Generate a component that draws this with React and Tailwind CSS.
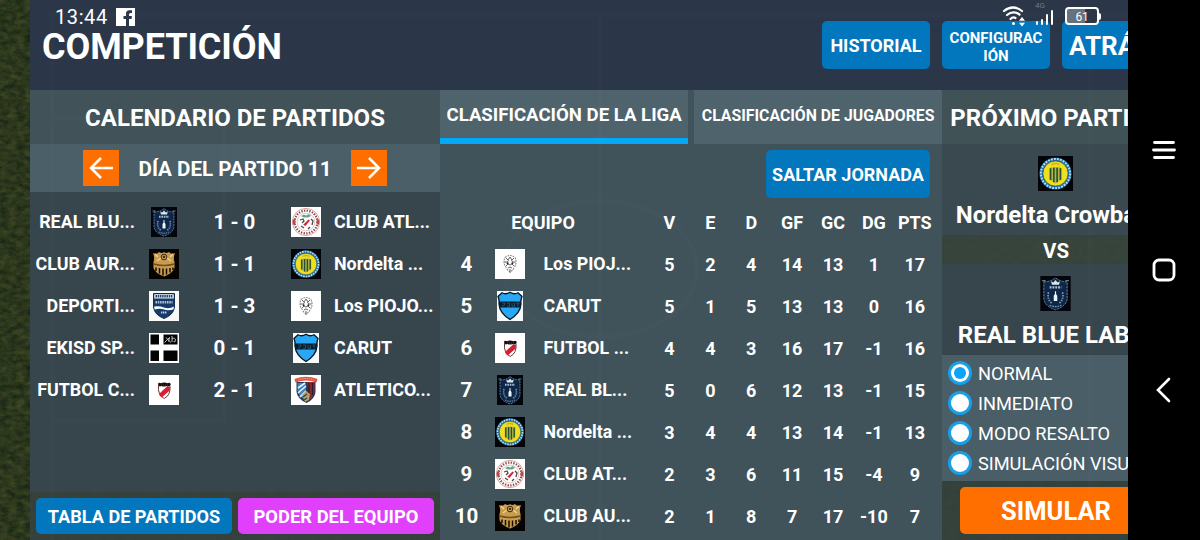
import React, { useState } from 'react';

const matches = [
  { home: 'REAL BLU...', homeCrest: 'real', score: '1 - 0', awayCrest: 'atl', away: 'CLUB ATL...' },
  { home: 'CLUB AUR...', homeCrest: 'aur', score: '1 - 1', awayCrest: 'nordelta', away: 'Nordelta ...' },
  { home: 'DEPORTI...', homeCrest: 'deportivo', score: '1 - 3', awayCrest: 'piojos', away: 'Los PIOJO...' },
  { home: 'EKISD SP...', homeCrest: 'ekisd', score: '0 - 1', awayCrest: 'carut', away: 'CARUT' },
  { home: 'FUTBOL C...', homeCrest: 'futbol', score: '2 - 1', awayCrest: 'atletico', away: 'ATLETICO...' },
];

const table = [
  { pos: 4, crest: 'piojos', name: 'Los PIOJ...', stats: [5, 2, 4, 14, 13, 1, 17] },
  { pos: 5, crest: 'carut', name: 'CARUT', stats: [5, 1, 5, 13, 13, 0, 16] },
  { pos: 6, crest: 'futbol', name: 'FUTBOL ...', stats: [4, 4, 3, 16, 17, -1, 16] },
  { pos: 7, crest: 'real', name: 'REAL BL...', stats: [5, 0, 6, 12, 13, -1, 15] },
  { pos: 8, crest: 'nordelta', name: 'Nordelta ...', stats: [3, 4, 4, 13, 14, -1, 13] },
  { pos: 9, crest: 'atl', name: 'CLUB AT...', stats: [2, 3, 6, 11, 15, -4, 9] },
  { pos: 10, crest: 'aur', name: 'CLUB AU...', stats: [2, 1, 8, 7, 17, -10, 7] },
];

const columns = ['V', 'E', 'D', 'GF', 'GC', 'DG', 'PTS'];
const modes = ['NORMAL', 'INMEDIATO', 'MODO RESALTO', 'SIMULACIÓN VISUAL'];

// Escudos de los equipos
const crests = {
  real: (
    <>
      <rect x="2" width="26" height="30" fill="#02050b" />
      <path d="M5 5Q11 5 15 1.5Q19 5 25 5V20Q24 26 15 29Q6 26 5 20Z" fill="#0e2748" stroke="#6f8aa5" strokeWidth=".8" strokeDasharray="2 .8" />
      <path d="M12 7.500l-.8-3 2 1L15 3.500l1.800 2 2-1-.8 3z" fill="#dbe7ef" />
      <path d="M10 9.800h10" stroke="#a9c0d3" strokeWidth="2" strokeDasharray="1.600 .8" />
      <path d="M14.500 13h1v2.500l1 1.500v4.500h-3v-4.500l1-1.500z" fill="#eef5fa" />
      <path d="M9 14Q7.500 20 12 23.500M21 14Q22.500 20 18 23.500" fill="none" stroke="#8ba5bb" strokeWidth="1.400" strokeDasharray="1.200 1" />
      <path d="M10 25Q15 27.500 20 25" fill="none" stroke="#7f9ab5" strokeWidth="1" strokeDasharray="1.500 .8" />
      <path d="M3.500 4h3M23.500 4h3" stroke="#9bb5cb" strokeWidth=".7" />
    </>
  ),
  aur: (
    <>
      <rect width="30" height="30" fill="#050403" />
      <path d="M4 4Q8 6 10 3Q13 5 15 3Q17 5 20 3Q22 6 26 4Q24 9 25.500 13V19Q24 24 15 27.500Q6 24 4.500 19V13Q6 9 4 4Z" fill="#c89b4e" />
      <path d="M6 5l3 3M24 5l-3 3M8 12l4-3M22 12l-4-3" stroke="#f0d08c" strokeWidth="1.500" />
      <circle cx="15" cy="8" r="2.800" fill="#c9a255" stroke="#3a2a10" strokeWidth="1" />
      <path d="M15 6.500l1.300 1-.5 1.500h-1.600l-.5-1.500z" fill="#3a2a10" />
      <path d="M4.500 15Q15 18 25.500 15" fill="none" stroke="#705020" strokeWidth="1.600" />
      <path d="M7 18.500v3.500M10.500 19v5.500M14 19.500v7M17.500 19.500v6M21 19v4.500M24 18.500v2.500" stroke="#120d05" strokeWidth="1.500" />
    </>
  ),
  deportivo: (
    <>
      <rect width="30" height="30" fill="#f8f8f6" />
      <path d="M4.500 2.500H25.500V16Q24.500 24 15 27.500Q5.500 24 4.500 16Z" fill="#173a68" stroke="#102c52" strokeWidth="1" />
      <path d="M5.200 3.200h19.600v4.300H5.200z" fill="#e8edf2" />
      <path d="M6.500 5.300h17" stroke="#25436c" strokeWidth="2.400" strokeDasharray="1.500 .7" />
      <path d="M6.500 11.300h17" stroke="#b4c5d8" strokeWidth="2.400" strokeDasharray="1.500 .8" />
      <path d="M5 15.500Q10 14.500 15 16.500T25 15.500Q24.600 18 24.300 18.500Q19 20 15 18.500T5.700 18.500Z" fill="#fafcfd" />
      <path d="M12 21.500h6" stroke="#c4d2e2" strokeWidth="1.800" strokeDasharray="1.400 .6" />
    </>
  ),
  ekisd: (
    <>
      <rect width="30" height="30" fill="#fff" />
      <path d="M1.500 1.500h8.500v10h-8.500zM14.500 1.500h14v10h-14zM1.500 17.500h8.500v10.500h-8.500zM14.500 17.500h14v10.500h-14z" fill="#030303" />
      <path d="M15.500 9.500l5-5-1 4M17 4.500Q20 8 22 9.500M23 3v6M23 6Q26 4 26.500 7Q26 10 24.500 8.500" fill="none" stroke="#d8d8d8" strokeWidth=".9" />
    </>
  ),
  futbol: (
    <>
      <rect width="30" height="30" fill="#fff" />
      <path d="M9.500 10.500H21Q22 20 15.300 23.500Q8.500 20 9.500 10.500Z" fill="#fff" stroke="#5b2125" strokeWidth=".9" />
      <path d="M18 11.500l3 .5-.3 3.500-8 7Q10.500 21 10 19z" fill="#d91d34" />
      <path d="M9 9Q9.500 7 12 8.200Q15 7 18.500 8.200Q21.500 7 21.800 9.500Q20 12.500 17.500 11Q15 12 12.500 11Q9.500 12.500 9 9Z" fill="#1c0c0e" />
      <path d="M12 10h7" stroke="#a62630" strokeWidth=".8" strokeDasharray="1 1" />
    </>
  ),
  atl: (
    <>
      <rect width="30" height="30" fill="#fff" />
      <circle cx="15" cy="15" r="13.600" fill="none" stroke="#cf8a8a" strokeWidth=".8" />
      <circle cx="15" cy="15" r="11.400" fill="none" stroke="#8a4a4a" strokeWidth="2.200" strokeDasharray="1.400 1.300" />
      <circle cx="15" cy="15" r="8.900" fill="none" stroke="#d09a9a" strokeWidth=".6" />
      <path d="M10 9l3-1.500 2 1 3-1.500 2 2-3 1.500h-4z" fill="#6aa588" />
      <path d="M9 13l3-1 1 2-2 2M20 12l2 2-1 4M10 19l3 2M19 20l-2 2" fill="none" stroke="#4b4b4b" strokeWidth="1.300" />
      <path d="M17.500 12.500l1.500 1-4.500 5.500-2.300-1.300z" fill="#d8232f" />
      <path d="M1.800 12.500h2.500v5H1.800zM25.700 12.500h2.500v5h-2.500z" fill="#b94a4c" />
    </>
  ),
  nordelta: (
    <>
      <rect width="30" height="30" fill="#030407" />
      <circle cx="15" cy="15" r="13.800" fill="#1c6aa4" />
      <circle cx="15" cy="15" r="12.500" fill="none" stroke="#b8dcea" strokeWidth="1.700" strokeDasharray="1.600 1" />
      <circle cx="15" cy="15" r="10.800" fill="#f0df1e" stroke="#2b5a73" strokeWidth=".7" />
      <path d="M9.700 10.500Q12 9 15 9.500Q18 9 20.300 10.500V20Q18 22 15 23.500Q12 22 9.700 20Z" fill="#b3b944" />
      <path d="M10.800 10.500v10M13.600 10v12.500M16.400 10v12.500M19.200 10.500v10" stroke="#2b4d31" strokeWidth="1.400" />
      <path d="M11.500 7.500q3.500-2 7 0" fill="none" stroke="#c9b428" strokeWidth="1.300" />
    </>
  ),
  piojos: (
    <>
      <rect width="30" height="30" fill="#fff" />
      <path d="M10 8.500Q15 4.500 20 8.500Q22.500 14 19 19Q15 26 11.500 19Q7.500 14 10 8.500Z" fill="none" stroke="#888" strokeWidth="1.100" strokeDasharray="1.800 .9" />
      <path d="M11 9l2 2 2-3 2 3 2-2M9.500 13h3l1-2M20.500 13h-3l-1-2M11 17l2-2 2 1 2-1 2 2M13 19l2-1 2 1M15 20v4" fill="none" stroke="#555" strokeWidth=".9" />
      <circle cx="12.600" cy="14.200" r="1" fill="#222" />
      <circle cx="17.400" cy="14.200" r="1" fill="#222" />
    </>
  ),
  carut: (
    <>
      <rect x="2" width="26" height="30" fill="#f7fafc" />
      <path d="M7 1.800Q11 4 15 1.200Q19 4 23 1.800L27 5.500Q25.500 9 26 13Q25.500 22 15 28.500Q4.500 22 4 13Q4.500 9 3 5.500Z" fill="#27a7f4" stroke="#07141e" strokeWidth="1.300" />
      <path d="M4 10.500h22v6H4z" fill="#0a1d2c" />
      <path d="M7 12h3v1.500l-3 1.800M12 12h2.500v3.300H12M17 12v3.300h2.500V12M21.500 12h3M23 12v3.300" fill="none" stroke="#2c5f80" strokeWidth=".8" />
    </>
  ),
  atletico: (
    <>
      <rect width="30" height="30" fill="#fff" />
      <path d="M5.500 7H24.500V17Q24 24 15.500 28Q6.500 24 5.500 17Z" fill="#243a57" />
      <path d="M6.500 8h8.500v17Q7 21 6.500 16z" fill="#3d85c4" />
      <path d="M7 13l7-5M7 18l8-7M9 22l6-6" stroke="#e8f0f5" strokeWidth="1.600" />
      <path d="M16 7h7.500v10Q23 21 19 24z" fill="#8c2a2c" />
      <path d="M18 8v14M21.500 8v12" stroke="#2b1b2a" strokeWidth="1.300" />
      <path d="M11 20l4-4 4 3-1 6-4 2z" fill="#b8a060" />
      <path d="M12 22l4-3M13 25l3-2" stroke="#27485a" strokeWidth="1.400" />
      <path d="M3.500 4Q15-.5 26.500 4L25.500 7.500Q15 3.500 4.500 7.500Z" fill="#dc5548" />
      <path d="M7 5Q15 2 23 5" fill="none" stroke="#f2b09f" strokeWidth="1" strokeDasharray="1.200 1" />
    </>
  ),
};

function Crest({ name, className = 'h-[30px] w-[30px]' }) {
  return (
    <svg viewBox="0 0 30 30" className={`shrink-0 ${className}`}>
      {crests[name]}
    </svg>
  );
}

// Campo de fútbol detrás de los paneles
function Pitch() {
  return (
    <svg className="absolute inset-0 h-full w-full" viewBox="0 0 1200 540">
      <filter id="grass" x="0" y="0" width="100%" height="100%" colorInterpolationFilters="sRGB">
        <feTurbulence type="fractalNoise" baseFrequency="0.12 0.2" numOctaves="4" seed="4" />
        <feColorMatrix values="0.22 0 0 0 0.06  0.2 0.06 0 0 0.085  0.08 0 0.04 0 0.05  0 0 0 0 1" />
      </filter>
      <rect width="1200" height="540" filter="url(#grass)" />
    </svg>
  );
}

function PitchLines() {
  return (
    <svg className="pointer-events-none absolute inset-0 h-full w-full" viewBox="0 0 1200 540" fill="none" stroke="#9fb4c0" strokeOpacity=".025" strokeWidth="5">
      <path d="M52 540V15H1128M600 15V540M52 118H224V421H52M1090 15V540" />
      <ellipse cx="600" cy="269" rx="97" ry="68" />
    </svg>
  );
}

function StatusBar() {
  return (
    <div className="absolute left-[55px] top-[5px] flex w-[1046px] items-center justify-between text-white">
      <div className="flex items-center gap-2">
        <span className="text-[20px] leading-6 tracking-[0.6px]">13:44</span>
        <svg width="19" height="18" viewBox="0 0 19 18">
          <path d="M0 0h19v18h-6v-7h2.500l.5-3h-3V6.500Q13 5 14.500 5H16V2.300h-2.700Q10 2.300 10 6v2H7.500v3H10v7H0z" fill="#fff" />
        </svg>
      </div>
      <div className="flex h-6 items-start">
        <svg width="24" height="24" viewBox="0 0 24 24" fill="none" stroke="#fff" strokeWidth="2.200" strokeLinecap="round">
          <path d="M2 6Q11-1 20 6M5 10Q11 5 17.500 9.500M8.500 14Q11 11.500 13.500 13" />
          <circle cx="11.500" cy="18.500" r="1.500" fill="#fff" stroke="none" />
          <path d="M20 12l3 3.800h-6zM20 21.500l3-3.800h-6z" fill="#fff" stroke="none" />
        </svg>
        <div className="ml-[9px] flex w-[19px] flex-col items-start">
          <span className="-mt-[4px] text-[8px] leading-[9px] text-[#6d7785]">4G</span>
          <svg width="19" height="16" viewBox="0 0 19 16" stroke="#fff" strokeWidth="2" strokeLinecap="round">
            <path d="M2 14v-2M7 14v-4M12 14V5M17 14V1" />
          </svg>
        </div>
        <div className="ml-[11px] mt-[2px] flex items-center">
          <div className="flex h-[18px] w-[34px] items-center justify-center rounded-[4px] border-2 border-white bg-linear-to-r from-[#66727f] from-60% to-[#2b3748] to-60% pt-px text-[12px] tracking-[-0.3px]">
            61
          </div>
          <div className="h-[7px] w-[2px] rounded-r bg-white" />
        </div>
      </div>
    </div>
  );
}

function Header() {
  return (
    <header className="flex h-[90px] justify-between bg-[#2b3748]">
      <h1 className="pl-[12px] pt-[25px] text-[36px] font-bold leading-[44px] tracking-[-0.1px] text-white">COMPETICIÓN</h1>
      <div className="-mr-[42px] flex shrink-0 gap-3 pt-[21px] font-bold text-white">
        <button className="h-12 w-[108px] rounded-[5px] bg-[#0277bd] text-[18px]">HISTORIAL</button>
        <button className="h-12 w-[108px] rounded-[5px] bg-[#0277bd] pt-[3px] text-[15px] leading-[18px]">
          CONFIGURAC
          <br />
          IÓN
        </button>
        <button className="h-12 w-[108px] rounded-[5px] bg-[#0277bd] pl-[7px] pt-[2px] text-left text-[26px]">ATRÁS</button>
      </div>
    </header>
  );
}

function Calendar() {
  return (
    <section className="flex w-[410px] shrink-0 flex-col">
      <h2 className="flex h-[54px] items-center justify-center bg-[#415258] pt-[2px] text-[24px] font-bold">CALENDARIO DE PARTIDOS</h2>
      <div className="flex h-12 items-center justify-center gap-[18px] bg-[#4a5f68]">
        <button className="flex h-9 w-9 items-center justify-center bg-[#ff6f00]">
          <svg width="26" height="24" viewBox="0 0 26 24" fill="none" stroke="#fff" strokeWidth="2.500">
            <path d="M25 12H3M13 2L3 12l10 10" />
          </svg>
        </button>
        <span className="w-[196px] pt-[2px] text-center text-[20.600px] font-bold">DÍA DEL PARTIDO 11</span>
        <button className="flex h-9 w-9 items-center justify-center bg-[#ff6f00]">
          <svg width="26" height="24" viewBox="0 0 26 24" fill="none" stroke="#fff" strokeWidth="2.500">
            <path d="M1 12h22M13 2l10 10-10 10" />
          </svg>
        </button>
      </div>
      <div className="h-[300px] bg-[#37464d] pt-[9px]">
        {matches.map((m) => (
          <div key={m.home} className="grid h-[42px] grid-cols-[105px_57px_85px_57px_106px] items-center whitespace-nowrap text-[17.900px] font-bold">
            <span className="pt-px text-right">{m.home}</span>
            <span className="flex justify-center"><Crest name={m.homeCrest} /></span>
            <span className="pt-px text-center text-[20.500px]">{m.score}</span>
            <span className="flex justify-center"><Crest name={m.awayCrest} /></span>
            <span className="pt-px">{m.away}</span>
          </div>
        ))}
      </div>
      <div className="flex h-12 gap-[6px] bg-[#38433f]/90 p-[6px] font-bold">
        <button className="flex-1 rounded-[5px] bg-[#0277bd] pt-[2px] text-[18.100px]">TABLA DE PARTIDOS</button>
        <button className="flex-1 rounded-[5px] bg-[#e040fb] pt-[2px] text-[18.400px]">PODER DEL EQUIPO</button>
      </div>
    </section>
  );
}

function Standings() {
  return (
    <section className="w-[502px] shrink-0 bg-[#40525a]">
      <div className="flex h-[54px] gap-[6px] whitespace-nowrap font-bold">
        <button className="w-[248.500px] border-b-[6px] border-[#03a9f4] bg-[#4f636d] pt-[3px] text-[18.600px]">CLASIFICACIÓN DE LA LIGA</button>
        <button className="w-[248px] bg-[#4f636d] pb-[3px] text-[15.800px]">CLASIFICACIÓN DE JUGADORES</button>
      </div>
      <div className="flex h-[57px] justify-end pr-3 pt-[6px]">
        <button className="h-12 w-[164px] rounded-[5px] bg-[#0277bd] pt-px text-[18px] font-bold">SALTAR JORNADA</button>
      </div>
      <div className="grid h-[42px] grid-cols-[209px_repeat(7,40.900px)] items-center text-center text-[18px] font-bold">
        <span className="pr-[3px]">EQUIPO</span>
        {columns.map((c) => (
          <span key={c}>{c}</span>
        ))}
      </div>
      {table.map((row) => (
        <div key={row.pos} className="grid h-[42px] grid-cols-[53px_33px_123px_repeat(7,40.900px)] items-center whitespace-nowrap text-center text-[18px] font-bold">
          <span className="pt-px text-[20.500px]">{row.pos}</span>
          <span className="flex justify-center"><Crest name={row.crest} /></span>
          <span className="pl-[17.500px] text-left text-[17.800px]">{row.name}</span>
          {row.stats.map((s, i) => (
            <span key={columns[i]}>{s}</span>
          ))}
        </div>
      ))}
    </section>
  );
}

function NextMatch() {
  const [mode, setMode] = useState('NORMAL');

  return (
    <section className="flex w-[228px] shrink-0 flex-col whitespace-nowrap">
      <h2 className="flex h-[54px] items-center justify-center bg-[#415257] pt-[2px] text-[24px] font-bold">PRÓXIMO PARTIDO</h2>
      <div className="flex flex-col items-center text-[24px] font-bold">
        <div className="flex h-[91px] w-full flex-col items-center bg-[#39494f] pr-px pt-3">
          <Crest name="nordelta" className="h-[35px] w-[35px]" />
          <span className="mt-[8px] pl-[2px] leading-8">Nordelta Crowbars</span>
        </div>
        <span className="h-[29px] w-full bg-[#38463f]/90 pt-[2px] text-center text-[20.500px] leading-[29px]">VS</span>
        <div className="flex h-[91px] w-full flex-col items-center bg-[#37464d] pr-px pt-3">
          <Crest name="real" className="h-[35px] w-[35px]" />
          <span className="mt-[8px] pl-[3px] leading-8">REAL BLUE LABEL</span>
        </div>
      </div>
      <div className="h-[126px] bg-[#4a5e68] pl-[6px] pt-[3px]">
        {modes.map((m) => (
          <label key={m} className="flex h-[30px] items-center gap-[6px] text-[18.200px]">
            <input type="radio" name="mode" className="sr-only" checked={mode === m} onChange={() => setMode(m)} />
            <span className="flex h-6 w-6 items-center justify-center rounded-full bg-[#189fe8]">
              <span className="flex h-[18px] w-[18px] items-center justify-center rounded-full bg-white">
                {mode === m && <span className="h-[12px] w-[12px] rounded-full bg-[#0ba3f5]" />}
              </span>
            </span>
            <span className="pt-[2px]">{m}</span>
          </label>
        ))}
      </div>
      <div className="h-[59px] bg-[#36423f]/90 px-[18px] pt-[6px]">
        <button className="h-[47px] w-full rounded-[5px] bg-[#ff6f00] pt-[2px] text-[25.500px] font-bold">SIMULAR</button>
      </div>
    </section>
  );
}

function NavBar() {
  return (
    <nav className="relative flex w-[72px] shrink-0 flex-col items-center justify-between bg-black py-[138px]">
      <svg width="24" height="24" viewBox="0 0 24 24" fill="none" stroke="#fff" strokeWidth="2.800" strokeLinecap="round">
        <path d="M2.500 4.500h19M1.500 12h21M2.500 19.500h19" />
      </svg>
      <svg width="24" height="24" viewBox="0 0 24 24" fill="none" stroke="#fff" strokeWidth="2.800">
        <rect x="2" y="2" width="20" height="20" rx="5" />
      </svg>
      <svg width="26" height="26" viewBox="0 0 26 26" className="-mb-[1px]" fill="none" stroke="#fff" strokeWidth="2.600" strokeLinecap="round">
        <path d="M18 2L7 13l11 11" />
      </svg>
    </nav>
  );
}

export default function App() {
  return (
    <div className="relative flex h-[540px] w-[1200px] overflow-hidden bg-[#25301f] font-['Roboto',sans-serif] text-white">
      <Pitch />
      <main className="relative ml-[30px] w-[1098px] shrink-0 overflow-hidden">
        <Header />
        <div className="flex h-[450px]">
          <Calendar />
          <Standings />
          <NextMatch />
        </div>
      </main>
      <PitchLines />
      <NavBar />
      <StatusBar />
    </div>
  );
}
